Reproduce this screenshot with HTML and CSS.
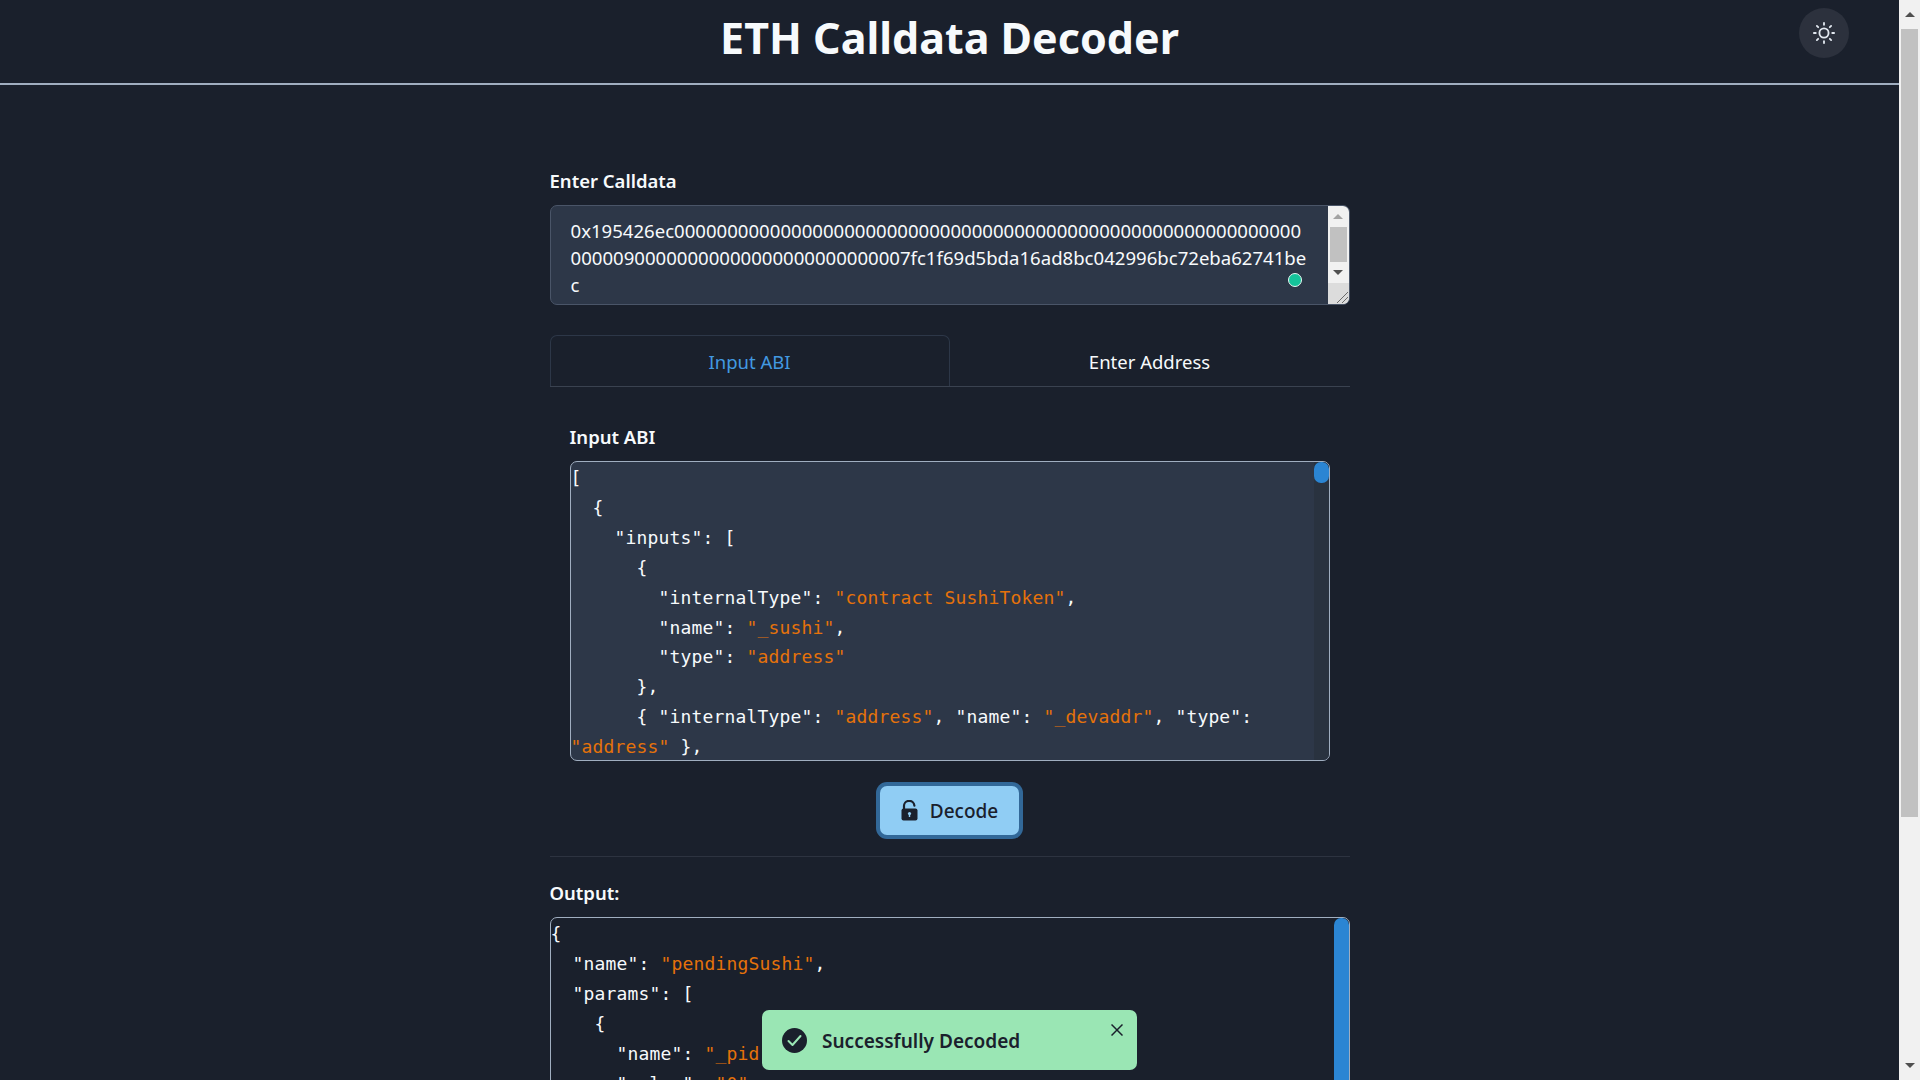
FILE: index.html
```html
<!DOCTYPE html>
<html lang="en">
<head>
	<meta charset="UTF-8">
	<title>ETH Calldata Decoder</title>
	<link rel="stylesheet" href="styles.css">
</head>
<body>
<div class="page">
	<header class="top">
		<h1 class="title">ETH Calldata Decoder</h1>
		<button class="theme" type="button" aria-label="Toggle theme">
			<svg width="22" height="22" viewBox="0 0 24 24" fill="none" stroke="currentColor" stroke-width="2" stroke-linecap="round" stroke-linejoin="round"><circle cx="12" cy="12" r="5"/><path d="M12 1v2"/><path d="M12 21v2"/><path d="M4.22 4.22l1.42 1.42"/><path d="M18.36 18.36l1.42 1.42"/><path d="M1 12h2"/><path d="M21 12h2"/><path d="M4.22 19.78l1.42-1.42"/><path d="M18.36 5.64l1.42-1.42"/></svg>
		</button>
	</header>

	<main class="wrap">
		<label class="label">Enter Calldata</label>
		<div class="field">
			<textarea class="calldata" wrap="off" spellcheck="false">0x195426ec00000000000000000000000000000000000000000000000000000000000
00000900000000000000000000000007fc1f69d5bda16ad8bc042996bc72eba62741be
c</textarea>
			<span class="dot"></span>
			<div class="sb-light">
				<span class="arrow up faded"></span>
				<span class="sb-thumb"></span>
				<span class="arrow down"></span>
				<span class="resizer">
					<svg width="12" height="12" viewBox="0 0 12 12" stroke="#6b6b6b" stroke-width="1"><path d="M1 12L12 1"/><path d="M6 12l6-6"/></svg>
				</span>
			</div>
		</div>

		<div class="tabs">
			<div class="tab active">Input ABI</div>
			<div class="tab">Enter Address</div>
		</div>

		<section class="panel">
			<label class="label">Input ABI</label>
			<div class="code abi">
<pre>[
  {
    "inputs": [
      {
        "internalType": <span class="str">"contract SushiToken"</span>,
        "name": <span class="str">"_sushi"</span>,
        "type": <span class="str">"address"</span>
      },
      { "internalType": <span class="str">"address"</span>, "name": <span class="str">"_devaddr"</span>, "type":
<span class="str">"address"</span> },</pre>
				<div class="bar"><span class="bar-thumb short"></span></div>
			</div>
		</section>

		<div class="actions">
			<button class="decode" type="button">
				<svg width="17" height="21" viewBox="0 0 17 21"><path d="M3 10V6.5a5.2 5.2 0 0 1 10.4-.9" fill="none" stroke="#1a202c" stroke-width="2.2" stroke-linecap="round"/><rect x="0.5" y="8.5" width="16" height="12" rx="2" fill="#1a202c"/><circle cx="8.5" cy="13.5" r="1.6" fill="#90cdf4"/><rect x="7.8" y="13.5" width="1.4" height="3.5" fill="#90cdf4"/></svg>
				<span class="decode-text">Decode</span>
			</button>
		</div>

		<hr class="rule">

		<label class="label">Output:</label>
		<div class="code output">
<pre>{
  "name": <span class="str">"pendingSushi"</span>,
  "params": [
    {
      "name": <span class="str">"_pid"</span>,
      "value": <span class="str">"0"</span>,
      "type": <span class="str">"uint256"</span>
    }
  ]
}</pre>
			<div class="bar"><span class="bar-thumb full"></span></div>
		</div>
	</main>

	<div class="toast">
		<svg width="25" height="25" viewBox="0 0 25 25"><circle cx="12.5" cy="12.5" r="12.5" fill="#1a202c"/><path d="M6.5 13l4 4 8-9" fill="none" stroke="#9ae6b4" stroke-width="2" stroke-linecap="round" stroke-linejoin="round"/></svg>
		<span class="toast-text">Successfully Decoded</span>
		<svg class="toast-close" width="12" height="12" viewBox="0 0 12 12" stroke="#1a202c" stroke-width="1.5"><path d="M0.5 0.5l11 11"/><path d="M11.5 0.5l-11 11"/></svg>
	</div>
</div>

<div class="sb-page">
	<span class="arrow up"></span>
	<span class="sb-thumb"></span>
	<span class="sb-fill"></span>
	<span class="arrow down"></span>
</div>
</body>
</html>
```

FILE: styles.css
```css
* { box-sizing: border-box; }
html, body { margin: 0; height: 100%; overflow: hidden; }
body {
	display: flex;
	background: #1a202c;
	color: #f7fafc;
	font-family: "Noto Sans", sans-serif;
	font-size: 18.5px;
	line-height: 27px;
}
.page {
	flex: 1;
	height: 1080px;
	overflow: hidden;
}

/* header */
.top {
	height: 85px;
	border-bottom: 2px solid #a0aec0;
	display: flex;
	justify-content: center;
	position: relative;
}
.title {
	margin: 9px 0 0;
	font-size: 43px;
	line-height: 58px;
	font-weight: 700;
	color: #f7fafc;
}
.theme {
	position: absolute;
	top: 8px;
	right: 50px;
	width: 50px;
	height: 50px;
	border: 0;
	border-radius: 50%;
	background: #2c313d;
	color: #e2e8f0;
	display: flex;
	align-items: center;
	justify-content: center;
	padding: 0;
}

/* main column */
.wrap {
	width: 800px;
	margin: 0 auto;
	padding-top: 83px;
}
.label {
	display: block;
	font-weight: 600;
	line-height: 25px;
	margin-bottom: 12px;
}

/* calldata */
.field {
	position: relative;
	display: flex;
	height: 100px;
	background: #2d3748;
	border: 1px solid #4a5568;
	border-radius: 7px;
	overflow: hidden;
}
.calldata {
	flex: 1;
	min-width: 0;
	margin: 0;
	padding: 11px 0 0 20px;
	background: transparent;
	border: 0;
	outline: 0;
	resize: none;
	overflow: hidden;
	color: #f7fafc;
	font: inherit;
	font-size: 18.58px;
	line-height: 27px;
}
.dot {
	position: absolute;
	top: 67px;
	right: 47px;
	width: 14px;
	height: 14px;
	border-radius: 50%;
	background: #15c39a;
	border: 1px solid #e6f7f3;
}

/* fake browser scrollbars */
.sb-light, .sb-page {
	display: flex;
	flex-direction: column;
	flex: none;
	width: 21px;
	background: #f1f1f1;
	align-items: center;
}
.sb-thumb {
	display: block;
	width: 17px;
	background: #c1c1c1;
}
.sb-light .sb-thumb { height: 35px; }
.sb-light .arrow { height: 21px; }
.sb-page { height: 1080px; }
.sb-page .arrow { height: 29px; }
.sb-page .sb-thumb { height: 788px; }
.sb-fill { flex: 1; }
.arrow {
	display: flex;
	align-items: center;
	justify-content: center;
	width: 100%;
}
.arrow::before {
	content: "";
	border-left: 5px solid transparent;
	border-right: 5px solid transparent;
}
.arrow.up::before { border-bottom: 5px solid #505050; }
.arrow.down::before { border-top: 5px solid #505050; }
.arrow.up.faded::before { border-bottom-color: #a3a3a3; }
.resizer {
	display: flex;
	align-items: flex-end;
	justify-content: flex-end;
	width: 21px;
	height: 21px;
	background: #dcdcdc;
	padding: 0 1px 1px 0;
}

/* tabs */
.tabs {
	display: flex;
	margin-top: 30px;
	height: 52px;
	border-bottom: 1px solid #3a4250;
}
.tab {
	flex: 1;
	display: flex;
	align-items: center;
	justify-content: center;
	color: #f7fafc;
	border: 1px solid transparent;
	border-bottom: 0;
}
.tab.active {
	color: #4299e1;
	border-color: #2d3748;
	border-radius: 7px 7px 0 0;
}

/* input abi */
.panel {
	padding: 37px 20px 0;
}
.code {
	display: flex;
	overflow: hidden;
	border: 1px solid #a0aec0;
	border-radius: 7px;
	font-family: "DejaVu Sans Mono", monospace;
	font-size: 18px;
	letter-spacing: 0.16px;
	line-height: 29.9px;
}
.code pre {
	flex: 1;
	min-width: 0;
	margin: 0;
	padding: 1px 0 0 0;
	font: inherit;
	letter-spacing: inherit;
	overflow: hidden;
}
.abi {
	height: 300px;
	background: #2d3748;
}
.output {
	height: 483px;
}
.str { color: #e5720a; }
.bar {
	flex: none;
	width: 15px;
}
.abi .bar { background: #29323f; }
.bar-thumb {
	display: block;
	background: #2b85d3;
	border-radius: 7px;
}
.bar-thumb.short { height: 21px; }
.bar-thumb.full { height: 100%; }

/* decode */
.actions {
	display: flex;
	justify-content: center;
	margin-top: 25px;
}
.decode {
	display: flex;
	align-items: center;
	justify-content: center;
	gap: 12px;
	width: 139px;
	height: 49px;
	padding: 0;
	border: 0;
	border-radius: 7px;
	background: #90cdf4;
	box-shadow: 0 0 0 4px rgba(66, 153, 225, 0.6);
	color: #1a202c;
	font: inherit;
	font-size: 19px;
	font-weight: 500;
}
.decode-text { margin-top: 2px; }
.rule {
	height: 1px;
	margin: 21px 0 23px;
	border: 0;
	background: #2d3340;
}

/* toast */
.toast {
	position: fixed;
	left: 762px;
	top: 1010px;
	width: 375px;
	height: 60px;
	display: flex;
	align-items: center;
	padding-left: 20px;
	background: #9ae6b4;
	border-radius: 7px;
	color: #1a202c;
}
.toast-text {
	margin: 2px 0 0 15px;
	font-size: 19.05px;
	font-weight: 600;
}
.toast-close {
	position: absolute;
	top: 14px;
	right: 14px;
}
```
